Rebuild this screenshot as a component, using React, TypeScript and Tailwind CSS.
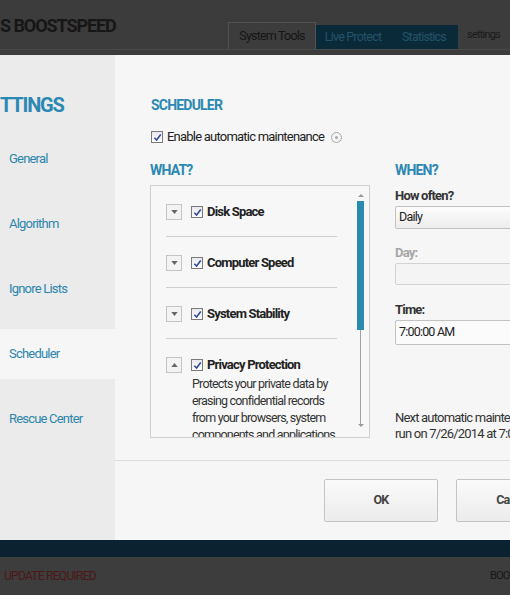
import React from 'react';

function Check() {
  return (
    <span className="flex h-[12px] w-[12px] flex-shrink-0 items-center justify-center border border-[#7a7a7a] bg-gradient-to-b from-[#e8e8ee] to-[#ffffff]">
      <svg viewBox="0 0 10 10" className="h-[9px] w-[9px]">
        <path d="M1.5 5.2 L4 7.8 L8.6 1.6" fill="none" stroke="#2c4a9a" strokeWidth="1.7" />
      </svg>
    </span>
  );
}

function ArrowButton({ up = false }: { up?: boolean }) {
  return (
    <span className="flex h-[16px] w-[16px] flex-shrink-0 items-center justify-center border border-[#c4c4c4] bg-[#f3f3f3]">
      <svg viewBox="0 0 8 5" className="h-[4px] w-[7px]">
        <path d={up ? 'M0 5 L4 0 L8 5 Z' : 'M0 0 L8 0 L4 5 Z'} fill="#666" />
      </svg>
    </span>
  );
}

const items = ['Disk Space', 'Computer Speed', 'System Stability'];
const nav = ['General', 'Algorithm', 'Ignore Lists', 'Scheduler', 'Rescue Center'];
const desc = [
  'Protects your private data by',
  'erasing confidential records',
  'from your browsers, system',
  'components and applications.',
];

export default function App() {
  return (
    <div className="flex h-[595px] w-[510px] flex-col overflow-hidden bg-[#3c3c3c] font-['Roboto',sans-serif] tracking-[-0.05em]">
      {/* top bar */}
      <div className="h-[55px] flex-shrink-0">
        <div className="flex h-[50px] items-end border-b border-[#4a4a4a]">
          <div className="mb-[11px] w-[228px] text-[18px] font-bold leading-[24px] tracking-[-0.06em] text-[#161616]">
            S BOOSTSPEED
          </div>
          <div className="flex h-[27px] w-[88px] items-center justify-center border border-b-0 border-[#525252] text-[12.5px] text-[#151515]">
            System Tools
          </div>
          <div className="flex h-[24px] items-center bg-[#0b2a39] text-[12.5px] text-[#24536a]">
            <span className="flex w-[74px] justify-center">Live Protect</span>
            <span className="flex w-[68px] justify-center">Statistics</span>
          </div>
          <div className="mb-[6px] ml-[9px] text-[11px] text-[#1a1a1a]">settings</div>
        </div>
      </div>

      {/* dialog */}
      <div className="flex h-[485px] flex-shrink-0">
        <div className="w-[115px] flex-shrink-0 bg-[#ebebeb]">
          <div className="mt-[38px] h-[24px] text-[20px] font-bold leading-[24px] tracking-[-0.06em] text-[#2a88b2]">TTINGS</div>
          <div className="mt-[17px] flex flex-col gap-[15px]">
            {nav.map((n) => (
              <div
                key={n}
                className={`flex h-[50px] items-center pl-[9px] text-[13px] text-[#2b86ad] ${n === 'Scheduler' ? 'bg-[#f6f6f6]' : ''}`}
              >
                {n}
              </div>
            ))}
          </div>
        </div>

        <div className="flex flex-1 flex-col bg-[#f6f6f6]">
          <div className="h-[405px] overflow-hidden pl-[36px] pt-[41px]">
            <div className="h-[18px] text-[14px] font-bold leading-[18px] text-[#2a88b2]">SCHEDULER</div>
            <div className="mt-[14px] flex h-[18px] items-center text-[13px] tracking-[-0.06em] text-[#222]">
              <Check />
              <span className="ml-[4px]">Enable automatic maintenance</span>
              <span className="ml-[7px] flex h-[11px] w-[11px] items-center justify-center rounded-full border border-[#a8a8a8]">
                <span className="h-[3px] w-[3px] rounded-full bg-[#a8a8a8]" />
              </span>
            </div>

            <div className="mt-[15px] flex w-[400px] gap-[25px]">
              {/* WHAT */}
              <div className="-ml-[1px] w-[220px] flex-shrink-0">
                <div className="h-[18px] text-[14px] font-bold leading-[18px] text-[#2a88b2]">WHAT?</div>
                <div className="mt-[6px] flex h-[253px] overflow-hidden border border-[#cfcfcf] bg-[#f7f7f7]">
                  <div className="w-[186px] flex-shrink-0 overflow-hidden pl-[15px] pt-[18px]">
                    {items.map((it) => (
                      <div key={it} className="mb-[18px] border-b border-[#cfcfcf] pb-[16px]">
                        <div className="flex h-[16px] items-center">
                          <ArrowButton />
                          <span className="ml-[9px]"><Check /></span>
                          <span className="ml-[4px] text-[13px] font-bold text-[#222]">{it}</span>
                        </div>
                      </div>
                    ))}
                    <div className="flex h-[16px] items-center">
                      <ArrowButton up />
                      <span className="ml-[9px]"><Check /></span>
                      <span className="ml-[4px] text-[13px] font-bold text-[#222]">Privacy Protection</span>
                    </div>
                    <div className="ml-[26px] mt-[2px] whitespace-nowrap text-[12.5px] leading-[17px] text-[#333]">
                      {desc.map((d) => (
                        <div key={d}>{d}</div>
                      ))}
                    </div>
                  </div>
                  <div className="ml-[20px] flex w-[7px] flex-col items-center pt-[8px]">
                    <svg viewBox="0 0 6 3" className="h-[3px] w-[6px]">
                      <path d="M0 3 L3 0 L6 3 Z" fill="#999" />
                    </svg>
                    <div className="mt-[4px] h-[129px] w-[7px] bg-[#2a8ab0]" />
                    <div className="h-[94px] w-[1px] bg-[#a0a0a0]" />
                    <svg viewBox="0 0 6 3" className="h-[3px] w-[6px]">
                      <path d="M0 0 L6 0 L3 3 Z" fill="#999" />
                    </svg>
                  </div>
                </div>
              </div>

              {/* WHEN */}
              <div className="w-[200px] flex-shrink-0">
                <div className="h-[18px] text-[14px] font-bold leading-[18px] text-[#2a88b2]">WHEN?</div>
                <div className="mt-[8px] h-[18px] text-[13px] font-bold leading-[18px] text-[#333]">How often?</div>
                <div className="mt-[1px] flex h-[23px] items-center rounded-[2px] border border-[#c2c2c2] bg-gradient-to-b from-[#fdfdfd] to-[#ececec] pl-[3px] text-[12.5px] text-[#222]">
                  Daily
                </div>
                <div className="mt-[15px] h-[18px] text-[13px] font-bold leading-[18px] text-[#a6a6a6]">Day:</div>
                <div className="mt-[1px] h-[22px] rounded-[2px] border border-[#d2d2d2] bg-[#f4f4f4]" />
                <div className="mt-[16px] h-[18px] text-[13px] font-bold leading-[18px] text-[#333]">Time:</div>
                <div className="mt-[1px] flex h-[25px] items-center rounded-[2px] border border-[#c2c2c2] bg-[#fbfbfb] pl-[3px] text-[12.5px] text-[#222]">
                  7:00:00 AM
                </div>
                <div className="mt-[65px] whitespace-nowrap text-[13px] leading-[16px] text-[#333]">
                  <div>Next automatic maintenance will be</div>
                  <div>run on 7/26/2014 at 7:00 AM</div>
                </div>
              </div>
            </div>
          </div>

          <div className="flex flex-1 items-center gap-[18px] border-t border-[#dcdcdc] pl-[209px]">
            <button className="flex h-[43px] w-[114px] flex-shrink-0 items-center justify-center rounded-[2px] border border-[#c4c4c4] bg-gradient-to-b from-[#fafafa] to-[#ececec] text-[12.5px] font-bold text-[#444]">
              OK
            </button>
            <button className="flex h-[43px] w-[114px] flex-shrink-0 items-center justify-center rounded-[2px] border border-[#c4c4c4] bg-gradient-to-b from-[#fafafa] to-[#ececec] text-[12.5px] font-bold text-[#444]">
              Cancel
            </button>
          </div>
        </div>
      </div>

      {/* bottom */}
      <div className="h-[17px] flex-shrink-0 bg-[#0b2230]" />
      <div className="flex flex-1 items-center justify-between bg-[#3d3d3d] pl-[4px]">
        <span className="text-[12px] tracking-[-0.06em] text-[#4c1818]">UPDATE REQUIRED</span>
        <span className="w-[20px] overflow-hidden whitespace-nowrap text-[11px] text-[#161616]">BOOSTSPEED</span>
      </div>
    </div>
  );
}
